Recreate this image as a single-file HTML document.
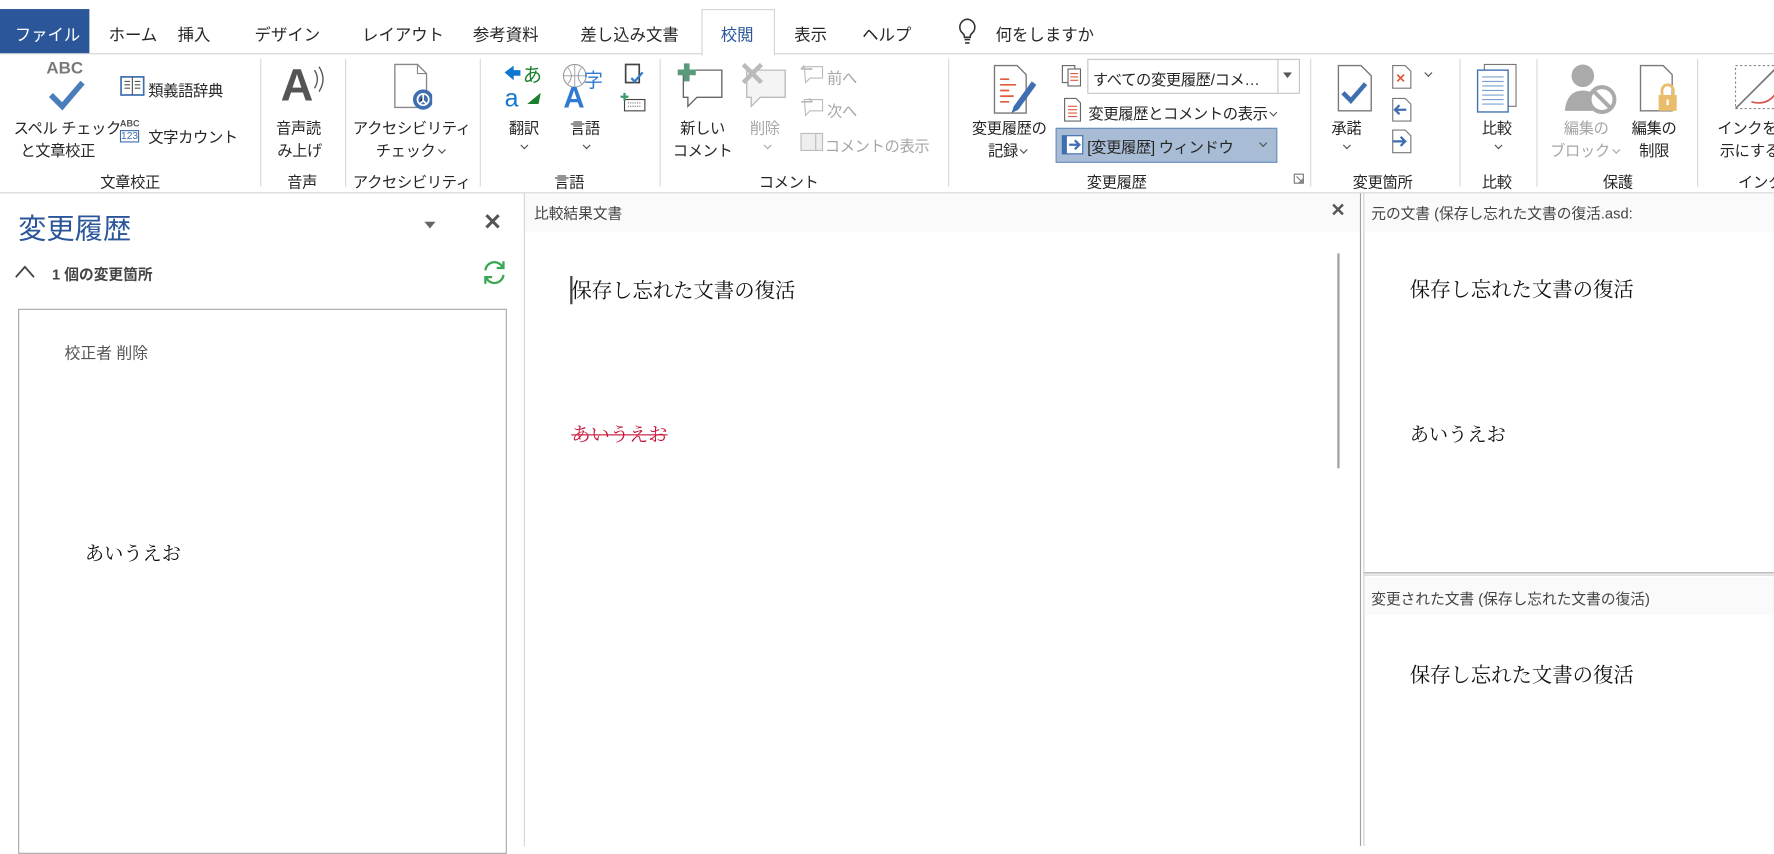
<!DOCTYPE html>
<html><head><meta charset="utf-8">
<style>
html,body{margin:0;padding:0;width:1774px;height:846px;overflow:hidden;background:#fff}
#s{position:absolute;left:0;top:0;width:1568px;height:748px;transform:scale(1.13138,1.131);transform-origin:0 0;font-family:"Liberation Sans","Noto Sans CJK JP",sans-serif;color:#262626}
.a{position:absolute;white-space:nowrap}
.t{font-size:14.5px;top:20px;color:#262626}
.r{font-size:13.5px;color:#262626;letter-spacing:-0.3px}
.g{color:#a6a6a6}
.c{text-align:center;transform:translateX(-50%)}
.sep{position:absolute;top:52px;height:113px;width:1px;background:#d8d8d8}
.lbl{position:absolute;top:150px;font-size:13.5px;transform:translateX(-50%);white-space:nowrap;letter-spacing:-0.3px}
.doc{font-family:"Liberation Serif","Noto Serif CJK JP","Noto Serif CJK SC",serif;font-size:18px;color:#111}
.ch{display:inline-block;width:4px;height:4px;border-right:1px solid #555;border-bottom:1px solid #555;transform:rotate(45deg);vertical-align:middle;margin:0 3px 4px 3px}
.g .ch{border-color:#aaa}
.chs{position:absolute;width:4px;height:4px;border-right:1px solid #555;border-bottom:1px solid #555;transform:rotate(45deg)}
</style></head><body>
<div id="s">
<!-- tab bar -->
<div class="a" style="left:0;top:47px;width:1568px;height:1px;background:#d4d4d4"></div>
<div class="a" style="left:0;top:8px;width:79px;height:39px;background:#2b579a"></div>
<div class="a t" style="left:13px;color:#fff">ファイル</div>
<div class="a t" style="left:96px">ホーム</div>
<div class="a t" style="left:157px">挿入</div>
<div class="a t" style="left:225px">デザイン</div>
<div class="a t" style="left:320px">レイアウト</div>
<div class="a t" style="left:418px">参考資料</div>
<div class="a t" style="left:513px">差し込み文書</div>
<div class="a" style="left:620px;top:8px;width:63px;height:40px;border:1px solid #d4d4d4;border-bottom:none;background:#fff"></div>
<div class="a t" style="left:637px;color:#2b579a">校閲</div>
<div class="a t" style="left:702px">表示</div>
<div class="a t" style="left:762px">ヘルプ</div>
<svg class="a" style="left:846px;top:15px" width="18" height="26" viewBox="0 0 18 26"><path d="M9 2a7 7 0 0 0-4 12.5c1 1 1.5 2 1.5 3.5h5c0-1.5.5-2.5 1.5-3.5A7 7 0 0 0 9 2z" fill="none" stroke="#333" stroke-width="1.4"/><path d="M6.5 20h5M7 23h4" stroke="#333" stroke-width="1.4"/></svg>
<div class="a t" style="left:880px">何をしますか</div>
<!-- ribbon -->
<div class="a" style="left:0;top:170px;width:1568px;height:1px;background:#d4d4d4"></div>
<div class="sep" style="left:230px"></div><div class="sep" style="left:305px"></div><div class="sep" style="left:424px"></div><div class="sep" style="left:583px"></div><div class="sep" style="left:838px"></div><div class="sep" style="left:1158px"></div><div class="sep" style="left:1290px"></div><div class="sep" style="left:1358px"></div><div class="sep" style="left:1500px"></div>
<!-- 文章校正 -->
<div class="a" style="left:41px;top:52px;font-size:15px;font-weight:bold;color:#7a7a7a">ABC</div>
<svg class="a" style="left:42px;top:70px" width="34" height="28"><path d="M3 14l10 10L31 3" fill="none" stroke="#4a7ebb" stroke-width="5"/></svg>
<div class="a r" style="left:12px;top:102px">スペル チェック</div>
<div class="a r" style="left:18px;top:122px">と文章校正</div>
<svg class="a" style="left:106px;top:67px" width="22" height="18"><rect x="1" y="1" width="20" height="16" fill="#fff" stroke="#3f6fb0" stroke-width="1.5"/><path d="M11 1v16M4 5h5M4 8h5M4 11h5M13 5h5M13 8h5M13 11h5" stroke="#555" stroke-width="1"/></svg>
<div class="a r" style="left:131px;top:69px">類義語辞典</div>
<div class="a" style="left:106px;top:105px;font-size:8px;font-weight:bold;color:#555">ABC</div>
<div class="a" style="left:106px;top:115px;font-size:9px;color:#3f6fb0;border:1px solid #3f6fb0;line-height:9px">123</div>
<div class="a r" style="left:131px;top:110px">文字カウント</div>
<div class="lbl" style="left:115px">文章校正</div>
<!-- 音声 -->
<div class="a" style="left:248px;top:55px;font-size:40px;font-weight:bold;color:#555;line-height:42px">A</div>
<svg class="a" style="left:276px;top:58px" width="12" height="26"><path d="M2 4q5 8 0 16M6 1q7 11 0 22" fill="none" stroke="#555" stroke-width="1.2"/></svg>
<div class="a r" style="left:244px;top:102px">音声読</div>
<div class="a r" style="left:245px;top:122px">み上げ</div>
<div class="lbl" style="left:267px">音声</div>
<!-- アクセシビリティ -->
<svg class="a" style="left:346px;top:55px" width="36" height="44"><path d="M3 2h20l8 8v30H3z" fill="#fff" stroke="#888" stroke-width="1.2"/><path d="M23 2v8h8" fill="none" stroke="#888"/><circle cx="28" cy="33" r="9" fill="#3f6fb0"/><circle cx="28" cy="33" r="5" fill="none" stroke="#fff" stroke-width="1.5"/><path d="M28 28v6l-3 3M28 34l3 3" stroke="#fff" stroke-width="1.5"/></svg>
<div class="a r c" style="left:364px;top:102px">アクセシビリティ</div>
<div class="a r c" style="left:364px;top:122px">チェック<span class="ch"></span></div>
<div class="lbl" style="left:364px">アクセシビリティ</div>
<!-- 言語 -->
<svg class="a" style="left:444px;top:56px" width="40" height="40"><path d="M2 8l8-6v4h6v5h-6v4z" fill="#0f77d0"/><text x="18" y="16" font-size="17" fill="#1a7f2e" font-family="Noto Sans CJK JP">あ</text><text x="2" y="38" font-size="22" fill="#0f77d0" font-family="Liberation Sans">a</text><path d="M34 26l-2 10h-10z" fill="#1a7f2e"/></svg>
<div class="a r c" style="left:463px;top:102px">翻訳</div><div class="chs" style="left:461px;top:126px"></div>
<svg class="a" style="left:496px;top:55px" width="42" height="42"><circle cx="12" cy="12" r="10" fill="none" stroke="#999"/><path d="M2 12h20M12 2v20M6 5q6 7 0 14M18 5q-6 7 0 14" fill="none" stroke="#999" stroke-width=".8"/><text x="2" y="40" font-size="26" font-weight="bold" fill="#2f7bd1" font-family="Liberation Sans">A</text><text x="20" y="22" font-size="17" fill="#2f7bd1" font-family="Noto Sans CJK JP">字</text></svg>
<div class="a r c" style="left:517px;top:102px">言語</div><div class="chs" style="left:516px;top:126px"></div>
<svg class="a" style="left:550px;top:56px" width="20" height="20"><rect x="3" y="1" width="12" height="16" fill="none" stroke="#444" stroke-width="1.5"/><path d="M8 13l3 3 7-8" fill="none" stroke="#2f7bd1" stroke-width="2"/></svg>
<svg class="a" style="left:548px;top:82px" width="24" height="18"><rect x="4" y="6" width="18" height="10" fill="none" stroke="#444"/><path d="M7 9h12M7 12h12" stroke="#777" stroke-dasharray="1 1"/><path d="M4 0v7M0.5 3.5h7" stroke="#3a9a6a" stroke-width="2"/></svg>
<div class="lbl" style="left:503px">言語</div>
<!-- コメント -->
<svg class="a" style="left:598px;top:54px" width="44" height="46"><path d="M6 8h34v24H18l-8 8v-8H6z" fill="#fff" stroke="#666" stroke-width="1.2"/><path d="M9 2v16M1 10h16" stroke="#5a9a7a" stroke-width="5"/></svg>
<div class="a r c" style="left:621px;top:102px">新しい</div><div class="a r c" style="left:621px;top:122px">コメント</div>
<svg class="a" style="left:654px;top:54px" width="44" height="46"><path d="M6 8h34v24H18l-8 8v-8H6z" fill="#f4f4f4" stroke="#bbb" stroke-width="1.2"/><path d="M3 3l16 16M19 3L3 19" stroke="#bbb" stroke-width="4"/></svg>
<div class="a r c g" style="left:676px;top:102px">削除</div><div class="chs" style="left:676px;top:126px;border-color:#aaa"></div>
<svg class="a" style="left:707px;top:56px" width="22" height="18"><path d="M4 3h16v10H9l-4 4z" fill="none" stroke="#bbb"/><path d="M1 5h10M1 5l3-3" stroke="#bbb" stroke-width="1.5" fill="none"/></svg>
<div class="a r g" style="left:731px;top:58px">前へ</div>
<svg class="a" style="left:707px;top:85px" width="22" height="18"><path d="M4 3h16v10H9l-4 4z" fill="none" stroke="#bbb"/><path d="M1 5h10M11 5l-3-3" stroke="#bbb" stroke-width="1.5" fill="none"/></svg>
<div class="a r g" style="left:731px;top:87px">次へ</div>
<svg class="a" style="left:707px;top:117px" width="22" height="18"><rect x="1" y="1" width="19" height="15" fill="#eee" stroke="#bbb"/><path d="M14 1v15" stroke="#bbb"/></svg>
<div class="a r g" style="left:729px;top:118px">コメントの表示</div>
<div class="lbl" style="left:697px">コメント</div>
<!-- 変更履歴 -->
<svg class="a" style="left:876px;top:56px" width="40" height="48"><path d="M3 2h20l8 8v34H3z" fill="#fff" stroke="#777" stroke-width="1.2"/><path d="M8 14h8M8 19h14M8 24h8M8 29h12M8 34h8" stroke="#e05a3c" stroke-width="1.5"/><path d="M36 16L20 38l-2 6 6-3 16-22z" fill="#3f6fb0"/></svg>
<div class="a r c" style="left:892px;top:102px">変更履歴の</div><div class="a r c" style="left:892px;top:122px">記録<span class="ch"></span></div>
<svg class="a" style="left:937px;top:55px" width="22" height="24"><rect x="2" y="3" width="11" height="15" fill="#fff" stroke="#666"/><rect x="7" y="6" width="11" height="15" fill="#fff" stroke="#666"/><path d="M9 10h7M9 13h7M9 16h7" stroke="#e05a3c"/></svg>
<div class="a" style="left:961px;top:52px;width:186px;height:29px;border:1px solid #c6c6c6;background:#fff"></div>
<div class="a" style="left:1129px;top:52px;width:1px;height:30px;background:#c6c6c6"></div>
<svg class="a" style="left:1134px;top:64px" width="8" height="5"><path d="M0 0h8L4 5z" fill="#555"/></svg>
<div class="a r" style="left:966px;top:59px">すべての変更履歴/コメ…</div>
<svg class="a" style="left:940px;top:86px" width="16" height="22"><path d="M1 1h10l4 4v16H1z" fill="#fff" stroke="#666"/><path d="M4 8h8M4 11h8M4 14h8M4 17h8" stroke="#e05a3c"/></svg>
<div class="a r" style="left:962px;top:89px">変更履歴とコメントの表示<span class="ch"></span></div>
<div class="a" style="left:933px;top:113px;width:194px;height:29px;background:#a8bcd6;border:1px solid #6c8ebd"></div>
<svg class="a" style="left:938px;top:119px" width="20" height="18"><rect x="1" y="1" width="18" height="16" fill="#fff" stroke="#3f6fb0"/><path d="M1 1h4v16H1z" fill="#3f6fb0"/><path d="M7 9h9M12 5l4 4-4 4" stroke="#3f6fb0" stroke-width="2" fill="none"/></svg>
<div class="a r" style="left:961px;top:119px">[変更履歴] ウィンドウ</div>
<div class="chs" style="left:1114px;top:124px"></div>
<div class="lbl" style="left:987px">変更履歴</div>
<svg class="a" style="left:1143px;top:153px" width="10" height="10"><path d="M1 1h8v8H1z" fill="none" stroke="#777"/><path d="M3 3l5 5M8 5v3H5" stroke="#777" fill="none"/></svg>
<!-- 変更箇所 -->
<svg class="a" style="left:1181px;top:56px" width="34" height="44"><path d="M2 2h20l9 9v31H2z" fill="#fff" stroke="#777" stroke-width="1.2"/><path d="M6 26l7 7 13-15" fill="none" stroke="#3f6fb0" stroke-width="4"/></svg>
<div class="a r c" style="left:1190px;top:102px">承諾</div><div class="chs" style="left:1188px;top:126px"></div>
<svg class="a" style="left:1230px;top:57px" width="18" height="22"><path d="M1 1h11l5 5v15H1z" fill="#fff" stroke="#777"/><path d="M5 9l6 6M11 9l-6 6" stroke="#e05a3c" stroke-width="1.5"/></svg>
<div class="chs" style="left:1260px;top:62px"></div>
<svg class="a" style="left:1230px;top:86px" width="18" height="22"><path d="M1 1h11l5 5v15H1z" fill="#fff" stroke="#777"/><path d="M13 11H3M7 7l-4 4 4 4" stroke="#3f6fb0" stroke-width="2" fill="none"/></svg>
<svg class="a" style="left:1230px;top:114px" width="18" height="22"><path d="M1 1h11l5 5v15H1z" fill="#fff" stroke="#777"/><path d="M1 11h11M8 7l4 4-4 4" stroke="#3f6fb0" stroke-width="2" fill="none"/></svg>
<div class="lbl" style="left:1222px">変更箇所</div>
<!-- 比較 -->
<svg class="a" style="left:1304px;top:55px" width="40" height="46"><rect x="8" y="2" width="28" height="37" fill="#fff" stroke="#777"/><rect x="2" y="7" width="27" height="37" fill="#fff" stroke="#3f6fb0" stroke-width="1.2"/><path d="M6 13h19M6 17h19M6 21h19M6 25h19M6 29h19M6 33h19M6 37h19" stroke="#7aa0d4"/></svg>
<div class="a r c" style="left:1323px;top:102px">比較</div><div class="chs" style="left:1322px;top:126px"></div>
<div class="lbl" style="left:1323px">比較</div>
<!-- 保護 -->
<svg class="a" style="left:1383px;top:56px" width="48" height="46"><circle cx="16" cy="11" r="10" fill="#aaa"/><path d="M0 42q2-18 16-18t16 18z" fill="#aaa"/><circle cx="33" cy="32" r="11" fill="#fff" stroke="#aaa" stroke-width="3.5"/><path d="M25 24l16 16" stroke="#aaa" stroke-width="3.5"/></svg>
<div class="a r c g" style="left:1402px;top:102px">編集の</div><div class="a r c g" style="left:1402px;top:122px">ブロック<span class="ch"></span></div>
<svg class="a" style="left:1448px;top:56px" width="36" height="46"><path d="M2 2h20l8 8v32H2z" fill="#fff" stroke="#777" stroke-width="1.2"/><rect x="18" y="28" width="16" height="14" fill="#e9bd6c"/><path d="M21 28v-4a5 5 0 0 1 10 0v4" fill="none" stroke="#e9bd6c" stroke-width="2.5"/><rect x="25" y="32" width="2" height="5" fill="#fff"/></svg>
<div class="a r c" style="left:1462px;top:102px">編集の</div><div class="a r c" style="left:1462px;top:122px">制限</div>
<div class="lbl" style="left:1430px">保護</div>
<!-- インク -->
<svg class="a" style="left:1532px;top:56px" width="40" height="42"><path d="M2 2h36v38H2z" fill="none" stroke="#888" stroke-dasharray="2 2"/><path d="M2 40L38 4" stroke="#777" stroke-width="1.5"/><path d="M16 34q14 4 22-8" fill="none" stroke="#d9534f" stroke-width="1.5"/></svg>
<div class="a r" style="left:1518px;top:102px">インクを非</div><div class="a r" style="left:1520px;top:122px">示にする</div>
<div class="lbl" style="left:1556px">インク</div>

<!-- left pane -->
<div class="a" style="left:463px;top:171px;width:1px;height:577px;background:#d4d4d4"></div>
<div class="a" style="left:16px;top:183px;font-size:25px;color:#2b579a">変更履歴</div>
<svg class="a" style="left:375px;top:196px" width="10" height="6"><path d="M0 0h10L5 6z" fill="#666"/></svg>
<div class="a" style="left:427px;top:184px;font-size:20px;font-weight:bold;color:#555">✕</div>
<svg class="a" style="left:12px;top:233px" width="20" height="14"><path d="M2 12L10 3l8 9" fill="none" stroke="#444" stroke-width="1.6"/></svg>
<div class="a" style="left:46px;top:232px;font-size:13px;font-weight:bold;color:#444">1 個の変更箇所</div>
<svg class="a" style="left:425px;top:229px" width="24" height="24"><path d="M4 10a8 8 0 0 1 15-3M20 14a8 8 0 0 1-15 3" fill="none" stroke="#3aa655" stroke-width="2"/><path d="M20 2v6h-6M4 22v-6h6" fill="none" stroke="#3aa655" stroke-width="2"/></svg>
<div class="a" style="left:16px;top:273px;width:430px;height:480px;border:1px solid #a8a8a8"></div>
<div class="a" style="left:57px;top:302px;font-size:14px;color:#555">校正者 削除</div>
<div class="a doc" style="left:75px;top:475px;font-size:17px">あいうえお</div>

<!-- middle -->
<div class="a" style="left:464px;top:171px;width:738px;height:34px;background:#fafafa"></div>
<div class="a" style="left:472px;top:178px;font-size:13px;color:#444">比較結果文書</div>
<div class="a" style="left:1176px;top:176px;font-size:16px;font-weight:bold;color:#555">✕</div>
<div class="a" style="left:1182px;top:224px;width:2px;height:190px;background:#a0a0a0"></div>
<div class="a" style="left:504px;top:244px;width:2px;height:25px;background:#444"></div>
<div class="a doc" style="left:505px;top:243px">保存し忘れた文書の復活</div>
<div class="a doc" style="left:505px;top:370px;font-size:17px;color:#c8163a;text-decoration:line-through">あいうえお</div>

<!-- right -->
<div class="a" style="left:1202px;top:171px;width:1px;height:577px;background:#a0a0a0"></div>
<div class="a" style="left:1205px;top:171px;width:1px;height:577px;background:#d0d0d0"></div>
<div class="a" style="left:1206px;top:171px;width:362px;height:34px;background:#fafafa"></div>
<div class="a" style="left:1212px;top:178px;font-size:13px;color:#444">元の文書 (保存し忘れた文書の復活.asd:</div>
<div class="a doc" style="left:1246px;top:242px">保存し忘れた文書の復活</div>
<div class="a doc" style="left:1246px;top:370px;font-size:17px">あいうえお</div>
<div class="a" style="left:1206px;top:506px;width:362px;height:1px;background:#a0a0a0"></div>
<div class="a" style="left:1206px;top:508px;width:362px;height:1px;background:#d0d0d0"></div>
<div class="a" style="left:1206px;top:510px;width:362px;height:34px;background:#fafafa"></div>
<div class="a" style="left:1212px;top:519px;font-size:13px;color:#444">変更された文書 (保存し忘れた文書の復活)</div>
<div class="a doc" style="left:1246px;top:583px">保存し忘れた文書の復活</div>
</div>
</body></html>
